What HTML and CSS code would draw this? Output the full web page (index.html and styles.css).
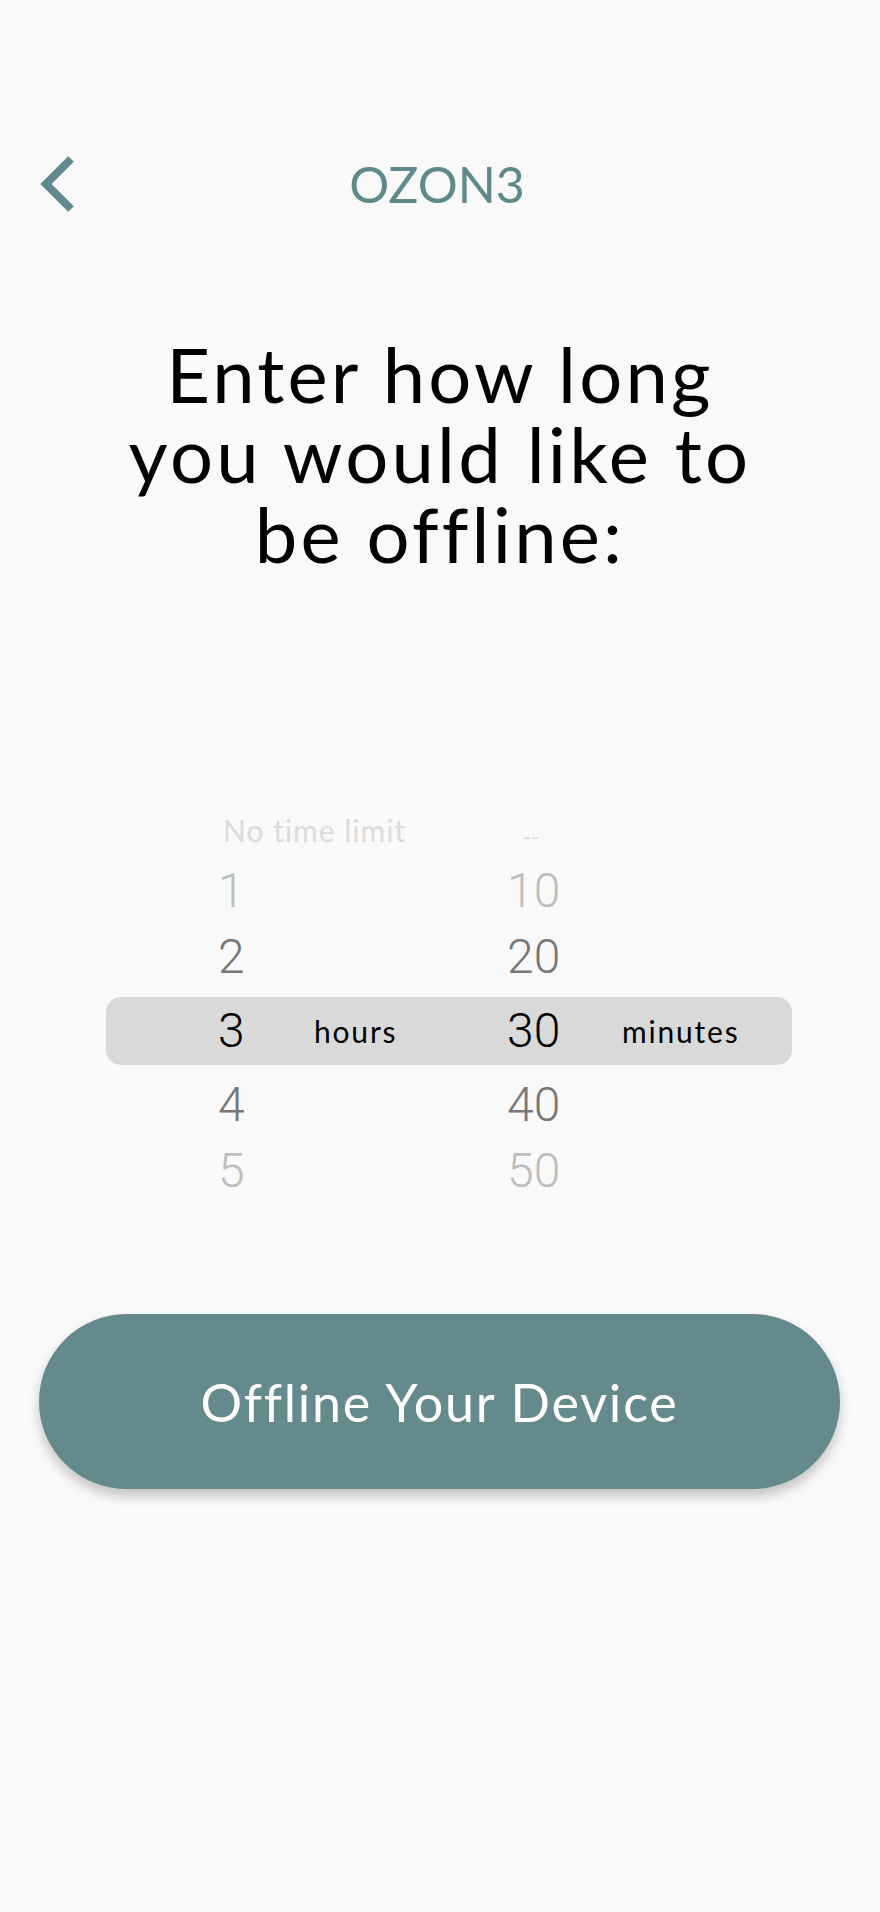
FILE: index.html
```html
<!DOCTYPE html>
<html lang="en">
<head>
<meta charset="utf-8">
<title>OZON3 - Offline</title>
<link rel="stylesheet" href="styles.css">
</head>
<body>
<div class="screen">
  <header class="topbar">
    <button class="back" aria-label="Back">
      <svg width="34" height="56" viewBox="0 0 34 56"><polyline points="31,3 6,28 31,53" fill="none" stroke="#5f898a" stroke-width="8" stroke-linecap="butt" stroke-linejoin="miter"/></svg>
    </button>
    <div class="brand">OZON3</div>
    <span class="spacer"></span>
  </header>

  <h1 class="prompt">
    <span class="line">Enter how long</span>
    <span class="line">you would like to</span>
    <span class="line">be offline:</span>
  </h1>

  <div class="picker">
    <div class="row r-top">
      <span class="hv faint">No time limit</span><span></span><span class="mv faint dash">--</span><span></span>
    </div>
    <div class="row r-far">
      <span class="hv light">1</span><span></span><span class="mv light">10</span><span></span>
    </div>
    <div class="row r-near">
      <span class="hv mid">2</span><span></span><span class="mv mid">20</span><span></span>
    </div>
    <div class="row r-sel">
      <span class="hv sel">3</span><span class="unit">hours</span><span class="mv sel">30</span><span class="unit">minutes</span>
    </div>
    <div class="row r-near">
      <span class="hv mid">4</span><span></span><span class="mv mid">40</span><span></span>
    </div>
    <div class="row r-far">
      <span class="hv light">5</span><span></span><span class="mv light">50</span><span></span>
    </div>
  </div>

  <div class="actions">
    <button class="cta">Offline Your Device</button>
  </div>
</div>
</body>
</html>
```

FILE: styles.css
```css
html, body {
  margin: 0;
  padding: 0;
  background: #f9f9f9;
}
body {
  font-family: "Lato", "Noto Sans", sans-serif;
  color: #000;
}
.screen {
  width: 880px;
  min-height: 1912px;
  display: flex;
  flex-direction: column;
}
.topbar {
  margin-top: 144px;
  height: 80px;
  display: grid;
  grid-template-columns: 1fr auto 1fr;
  align-items: center;
}
.back {
  justify-self: start;
  margin-left: 40px;
  padding: 0;
  border: 0;
  background: none;
  width: 34px;
  height: 56px;
  display: flex;
}
.brand {
  font-family: "Lato", sans-serif;
  font-weight: 400;
  font-size: 50px;
  color: #5f898a;
  line-height: 80px;
  margin-left: -6px;
}
.prompt {
  margin: 110px 0 0 0;
  display: flex;
  flex-direction: column;
  align-items: center;
  font-family: "Lato", sans-serif;
  font-weight: 400;
  font-size: 76px;
  letter-spacing: 3.2px;
  line-height: 80px;
  color: #000;
}
.prompt .line {
  display: block;
  height: 80px;
  white-space: nowrap;
}
.picker {
  margin-top: 228px;
  display: flex;
  flex-direction: column;
}
.row {
  margin-left: 106px;
  width: 574px;
  padding-left: 112px;
  display: grid;
  grid-template-columns: 96px 193px 115px auto;
  align-items: center;
  font-family: "Roboto", sans-serif;
  font-weight: 300;
}
.r-top { height: 56px; }
.r-far { height: 66px; }
.r-near { height: 66px; }
.r-sel {
  height: 68px;
  margin-top: 7px;
  margin-bottom: 7px;
  background: #d9d9d9;
  border-radius: 15px;
}
.hv, .mv {
  font-size: 48px;
  line-height: 1;
}
.faint {
  color: #dcdcdc;
  font-family: "Lato", sans-serif;
  font-weight: 400;
  font-size: 30px;
  letter-spacing: 1px;
  white-space: nowrap;
  padding-left: 5px;
}
.dash {
  padding-left: 16px;
  font-size: 22px;
  letter-spacing: 0;
  padding-top: 14px;
}
.light { color: #bdbdbd; }
.mid { color: #777; }
.sel { color: #000; }
.unit {
  font-family: "Lato", sans-serif;
  font-weight: 400;
  font-size: 30px;
  letter-spacing: 1.8px;
  color: #000;
}
.actions {
  margin-top: 110px;
  display: flex;
  justify-content: center;
}
.cta {
  width: 801px;
  height: 175px;
  margin-left: -1px;
  border: 0;
  border-radius: 88px;
  background: #648a8b;
  color: #fff;
  font-family: "Lato", sans-serif;
  font-weight: 400;
  font-size: 52px;
  letter-spacing: 1.8px;
  box-shadow: 0 7px 12px rgba(0, 0, 0, 0.22);
  cursor: pointer;
}
```
